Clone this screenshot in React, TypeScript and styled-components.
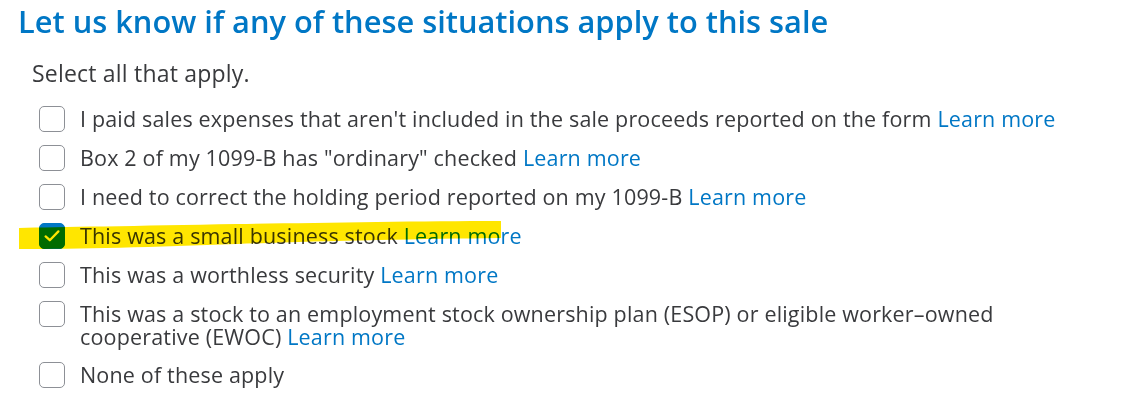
import { FC, ReactNode, useState } from 'react';
import styled, { createGlobalStyle } from 'styled-components';

const GlobalStyle = createGlobalStyle`
  html, body {
    margin: 0;
    padding: 0;
    background: #ffffff;
  }
  body {
    font-family: 'Open Sans', 'Noto Sans', sans-serif;
    color: #393a3d;
  }
`;

type Situation = {
  id: string;
  label: ReactNode;
};

const situations: Situation[] = [
  {
    id: 'expenses',
    label: "I paid sales expenses that aren't included in the sale proceeds reported on the form",
  },
  { id: 'ordinary', label: 'Box 2 of my 1099-B has "ordinary" checked' },
  { id: 'holding', label: 'I need to correct the holding period reported on my 1099-B' },
  { id: 'small', label: 'This was a small business stock' },
  { id: 'worthless', label: 'This was a worthless security' },
  {
    id: 'esop',
    label: (
      <>
        This was a stock to an employment stock ownership plan (ESOP) or eligible worker–owned
        <br />
        cooperative (EWOC)
      </>
    ),
  },
];

const CheckIcon: FC = () => (
  <svg width="20" height="20" viewBox="0 0 20 20" fill="none">
    <path d="M3.6 10.4l4.2 3.8L16.4 5.4" stroke="#ffffff" strokeWidth="2.3" strokeLinecap="round" strokeLinejoin="round" />
  </svg>
);

const App: FC = () => {
  const [checked, setChecked] = useState<Record<string, boolean>>({ small: true });

  const toggle = (id: string) => setChecked((prev) => ({ ...prev, [id]: !prev[id] }));

  return (
    <Page>
      <GlobalStyle />
      <Heading>Let us know if any of these situations apply to this sale</Heading>
      <Hint>Select all that apply.</Hint>

      <List>
        {situations.map((item) => (
          <Row key={item.id} onClick={() => toggle(item.id)}>
            {item.id === 'small' && <Highlight />}
            <Box $checked={!!checked[item.id]}>{checked[item.id] && <CheckIcon />}</Box>
            <Label>
              {item.label} <LearnMore href="#">Learn more</LearnMore>
            </Label>
          </Row>
        ))}
        <Row onClick={() => toggle('none')}>
          <Box $checked={!!checked.none}>{checked.none && <CheckIcon />}</Box>
          <Label>None of these apply</Label>
        </Row>
      </List>
    </Page>
  );
};

export default App;

const Highlight: FC = () => (
  <HighlightSvg width="486" height="32" viewBox="0 0 486 32">
    <path
      d="M2 8 C 40 7, 120 6, 220 4 C 300 3, 400 1, 484 1 L 484 18 C 400 19, 300 21, 220 24 C 140 27, 60 29, 2 29 Z"
      fill="#ffe600"
    />
  </HighlightSvg>
);

const Page = styled.div`
  display: flex;
  flex-direction: column;
  padding: 2px 0 0 18px;
  width: 1140px;
  height: 406px;
  box-sizing: border-box;
  overflow: hidden;
`;

const Heading = styled.h1`
  margin: 0;
  font-size: 30.8px;
  line-height: 38px;
  font-weight: 600;
  color: #0077c5;
`;

const Hint = styled.p`
  margin: 19px 0 0 14px;
  font-size: 23px;
  line-height: 28px;
  letter-spacing: 0.2px;
  color: #393a3d;
`;

const List = styled.div`
  display: flex;
  flex-direction: column;
  gap: 15px;
  margin: 20px 0 0 21px;
`;

const Row = styled.div`
  position: relative;
  display: flex;
  align-items: flex-start;
  gap: 15px;
  cursor: pointer;
`;

const HighlightSvg = styled.svg`
  position: absolute;
  left: -22px;
  top: -4px;
  mix-blend-mode: multiply;
  pointer-events: none;
  z-index: 2;
`;

const Box = styled.span<{ $checked: boolean }>`
  flex: 0 0 auto;
  display: flex;
  align-items: center;
  justify-content: center;
  width: 26px;
  height: 26px;
  margin: -1px 0 -1px;
  box-sizing: border-box;
  border-radius: 5px;
  border: 1px solid ${({ $checked }) => ($checked ? '#0077c5' : '#8d9096')};
  background: ${({ $checked }) => ($checked ? '#0077c5' : '#ffffff')};
`;

const Label = styled.span`
  font-size: 21.5px;
  line-height: 23px;
  letter-spacing: 0.17px;
  color: #393a3d;
`;

const LearnMore = styled.a`
  color: #0077c5;
  text-decoration: none;
`;
